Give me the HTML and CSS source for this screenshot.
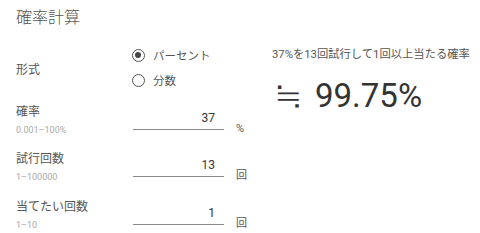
FILE: index.html
```html
<!DOCTYPE html>
<html lang="ja">
<head>
    <meta charset="UTF-8">
    <title>確率計算</title>
    <link rel="stylesheet" href="styles.css">
</head>
<body>
    <div class="page">
        <h1 class="title">確率計算</h1>
        <div class="calc">
            <div class="form">
                <div class="row-radio">
                    <div class="label">形式</div>
                    <div class="radios">
                        <label class="radio checked"><span class="mark"></span>パーセント</label>
                        <label class="radio"><span class="mark"></span>分数</label>
                    </div>
                </div>
                <div class="row">
                    <div class="label">
                        <div class="name">確率</div>
                        <div class="hint">0.001–100%</div>
                    </div>
                    <div class="field">37</div>
                    <span class="unit">%</span>
                </div>
                <div class="row">
                    <div class="label">
                        <div class="name">試行回数</div>
                        <div class="hint">1–100000</div>
                    </div>
                    <div class="field">13</div>
                    <span class="unit">回</span>
                </div>
                <div class="row">
                    <div class="label">
                        <div class="name">当てたい回数</div>
                        <div class="hint">1–10</div>
                    </div>
                    <div class="field">1</div>
                    <span class="unit">回</span>
                </div>
            </div>
            <div class="result">
                <p class="desc">37%を13回試行して1回以上当たる確率</p>
                <p class="answer"><span class="approx">≒</span>99.75%</p>
            </div>
        </div>
    </div>
</body>
</html>
```
FILE: styles.css
```css
* {
    margin: 0;
    padding: 0;
    box-sizing: border-box;
}
body {
    background-color: #fff;
    font-family: "Roboto", "Noto Sans CJK JP", sans-serif;
    color: #555;
}
.page {
    padding: 8px 16px 0;
}
.title {
    font-size: 16px;
    font-weight: 300;
    line-height: 20px;
    color: #555;
}
.calc {
    display: flex;
    margin-top: 14.5px;
}
.form {
    display: flex;
    flex-direction: column;
    gap: 13.5px;
    width: 256px;
    flex-shrink: 0;
}
.row-radio {
    display: flex;
    align-items: center;
    margin-bottom: -3.5px;
}
.label {
    width: 117px;
    font-size: 12px;
    color: #555;
}
.row-radio .label {
    padding-top: 2px;
}
.radios {
    display: flex;
    flex-direction: column;
}
.radio {
    display: flex;
    align-items: center;
    height: 25px;
    font-size: 11.5px;
    color: #555;
    margin-left: -1.5px;
}
.radio .mark {
    position: relative;
    width: 13px;
    height: 13px;
    border: 1.5px solid #555;
    border-radius: 50%;
    margin-right: 8.5px;
}
.radio.checked .mark:after {
    content: '';
    position: absolute;
    left: 2px;
    top: 2px;
    width: 6px;
    height: 6px;
    border-radius: 50%;
    background-color: #444;
}
.row {
    display: flex;
    align-items: flex-start;
    height: 34px;
}
.name {
    line-height: 18px;
}
.hint {
    margin-top: 2px;
    font-size: 9px;
    line-height: 14px;
    color: #aaa;
}
.field {
    width: 91px;
    height: 23px;
    margin-top: 4px;
    padding-right: 9px;
    border-bottom: 1px solid #888;
    font-size: 12px;
    line-height: 22px;
    text-align: right;
    color: #333;
}
.unit {
    margin-left: 12px;
    margin-top: 19px;
    font-size: 11px;
    line-height: 14px;
    color: #555;
}
.result {
    white-space: nowrap;
}
.desc {
    margin-top: 4.5px;
    font-size: 11.3px;
    line-height: 16px;
    color: #555;
}
.answer {
    margin-top: 7.5px;
    margin-left: 2px;
    font-size: 33px;
    line-height: 40px;
    color: #333;
}
.approx {
    font-family: "Noto Sans CJK JP", sans-serif;
    font-size: 36px;
    margin-right: 12px;
}
```
